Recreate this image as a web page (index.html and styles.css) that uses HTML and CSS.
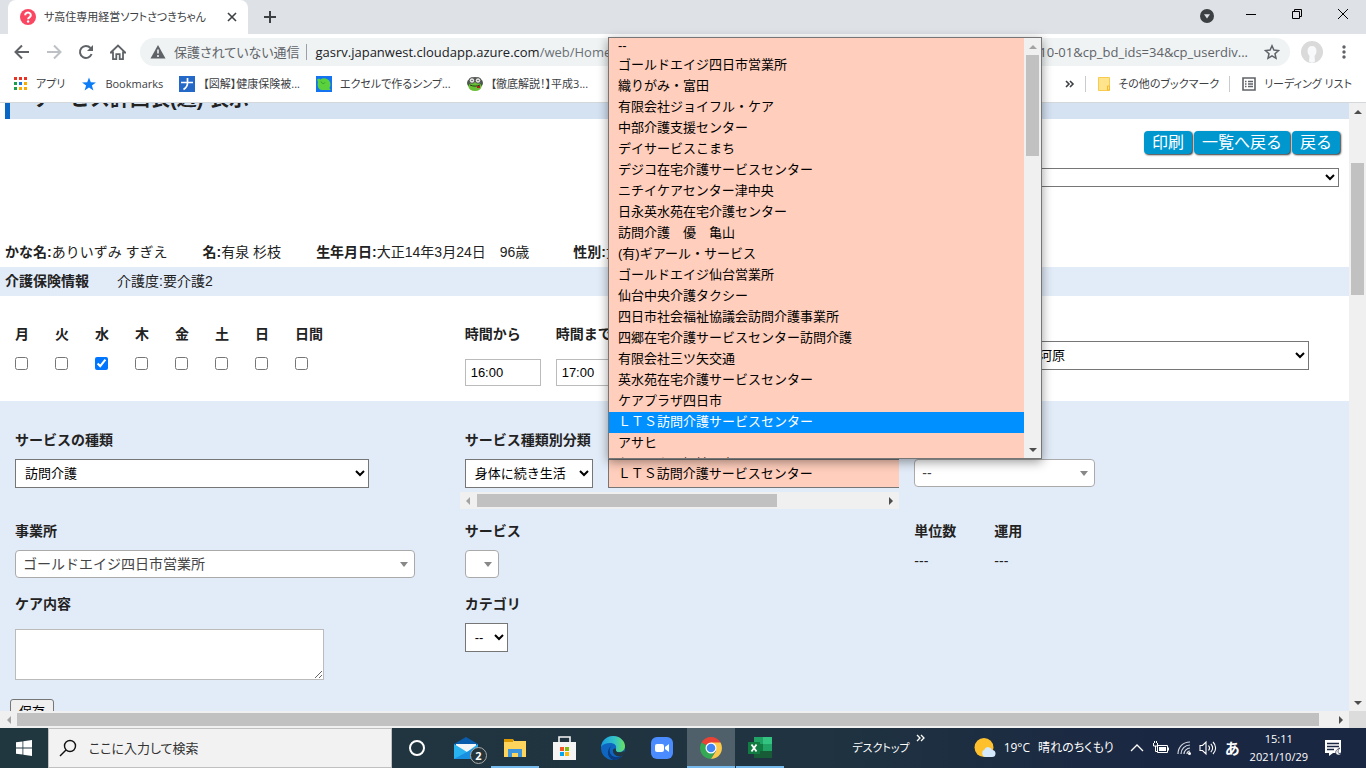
FILE: index.html
```html
<!DOCTYPE html>
<html lang="ja">
<head>
    <meta charset="UTF-8">
    <meta name="viewport" content="width=device-width, initial-scale=1.0">
    <title>サ高住専用経営ソフトさつきちゃん</title>
    <link rel="stylesheet" href="styles.css">
</head>
<body>

    <!-- browser window -->
    <header class="browser">
        <div class="tab-strip">
            <div class="tab">
                <svg class="favicon" width="16" height="16" viewBox="0 0 16 16"><circle cx="8" cy="8" r="8" fill="#fb4662"/><path d="M5.2 6.2a2.8 2.6 0 1 1 4.3 2.1c-1 .7-1.4 1-1.4 2" fill="none" stroke="#fff" stroke-width="2"/><circle cx="8.1" cy="12.5" r="1.2" fill="#fff"/></svg>
                <span class="tab-title">サ高住専用経営ソフトさつきちゃん</span>
                <button class="icon-button" aria-label="タブを閉じる"><svg width="16" height="16" viewBox="0 0 16 16"><path d="M4 4l8 8M12 4l-8 8" stroke="#3c4043" stroke-width="1.6"/></svg></button>
            </div>
            <button class="icon-button new-tab" aria-label="新しいタブ"><svg width="16" height="16" viewBox="0 0 16 16"><path d="M8 2v12M2 8h12" stroke="#3c4043" stroke-width="2"/></svg></button>
            <div class="window-controls">
                <button class="icon-button tab-search" aria-label="タブを検索"><svg width="16" height="16" viewBox="0 0 16 16"><circle cx="8" cy="8" r="7" fill="#3c4043"/><path d="M5 6.3h6L8 10.5z" fill="#dee1e6"/></svg></button>
                <button class="icon-button" aria-label="最小化"><svg width="12" height="12" viewBox="0 0 12 12"><path d="M1 6.5h10" stroke="#000"/></svg></button>
                <button class="icon-button" aria-label="元に戻す"><svg width="12" height="12" viewBox="0 0 12 12"><path d="M1.5 3.5h7v7h-7zM3.5 3V1.5h7v7H9" fill="none" stroke="#000"/></svg></button>
                <button class="icon-button" aria-label="閉じる"><svg width="12" height="12" viewBox="0 0 12 12"><path d="M1 1l10 10M11 1L1 11" stroke="#000"/></svg></button>
            </div>
        </div>

        <div class="toolbar">
            <button class="icon-button" aria-label="戻る"><svg width="16" height="16" viewBox="0 0 16 16"><path d="M15 8H2M8 1.5L1.5 8 8 14.5" fill="none" stroke="#5f6368" stroke-width="2"/></svg></button>
            <button class="icon-button" aria-label="進む"><svg width="16" height="16" viewBox="0 0 16 16"><path d="M1 8h13M8 1.5L14.5 8 8 14.5" fill="none" stroke="#bdc0c4" stroke-width="2"/></svg></button>
            <button class="icon-button" aria-label="再読み込み"><svg width="16" height="16" viewBox="0 0 16 16"><path d="M13.6 10A6 6 0 1 1 12.5 4" fill="none" stroke="#5f6368" stroke-width="2"/><path d="M15 1v6H9z" fill="#5f6368"/></svg></button>
            <button class="icon-button" aria-label="ホーム"><svg width="16" height="18" viewBox="0 0 16 18"><path d="M.8 9.500L8 2.500l7.200 7H13v6.700H9.700v-5H6.300v5H3V9.500z" fill="none" stroke="#5f6368" stroke-width="1.800"/></svg></button>
            <div class="omnibox">
                <svg width="16" height="16" viewBox="0 0 16 16"><path d="M8 1l7.5 13.5H.5z" fill="#5f6368"/><path d="M8 5.5v4M8 11v2" stroke="#eef2f4" stroke-width="1.6"/></svg>
                <span class="security">保護されていない通信</span>
                <span class="host">gasrv.japanwest.cloudapp.azure.com<span class="path">/web/Home</span></span>
                <span class="query">2021-10-01&amp;cp_bd_ids=34&amp;cp_userdiv...</span>
                <button class="icon-button" aria-label="ブックマークに追加"><svg width="16" height="16" viewBox="0 0 16 16"><path d="M8 1.8l1.9 4.3 4.6.5-3.5 3.1 1 4.6-4-2.4-4 2.4 1-4.6L1.5 6.6l4.6-.5z" fill="none" stroke="#5f6368" stroke-width="1.5"/></svg></button>
            </div>
            <button class="icon-button avatar" aria-label="プロフィール"><svg width="22" height="22" viewBox="0 0 22 22"><circle cx="11" cy="11" r="11" fill="#dadada"/><path d="M11 5c3 0 4.5 2 4.5 5 0 2-1 4-2 5l.5 5.5-3 1.500-3-1.500.5-5.500c-1-1-2-3-2-5C6.500 7 8 5 11 5z" fill="#f7f9fa"/></svg></button>
            <button class="icon-button" aria-label="メニュー"><svg width="16" height="16" viewBox="0 0 16 16"><g fill="#5f6368"><circle cx="8" cy="3" r="1.7"/><circle cx="8" cy="8" r="1.7"/><circle cx="8" cy="13" r="1.7"/></g></svg></button>
        </div>

        <nav class="bookmarks">
            <a class="bookmark" href="#"><svg width="14" height="14" viewBox="0 0 14 14"><path d="M0 0h3v3H0zM5 0h3v3H5zM10 0h3v3h-3z" fill="#ea3323"/><path d="M0 5h3v3H0z" fill="#1b9e4b"/><path d="M5 5h3v3H5z" fill="#1a73e8"/><path d="M10 5h3v3h-3zM10 10h3v3h-3zM5 10h3v3H5z" fill="#f9ab00"/><path d="M0 10h3v3H0z" fill="#1b9e4b"/></svg>アプリ</a>
            <a class="bookmark" href="#"><svg width="16" height="16" viewBox="0 0 16 16"><path d="M8 1.5l1.8 4.7 5.2.2-4.100 3.100 1.500 5L8 11.600l-4.400 2.900 1.500-5L1 6.400l5.200-.2z" fill="#0b7cf5"/></svg>Bookmarks</a>
            <a class="bookmark" href="#"><svg width="16" height="16" viewBox="0 0 16 16"><path d="M0 0h16v16H0z" fill="#2468c8"/><path d="M2 6.5h12M8.5 2v5c0 3-1.500 5-4 6.500" stroke="#fff" stroke-width="1.7" fill="none"/></svg>【図解】健康保険被...</a>
            <a class="bookmark" href="#"><svg width="16" height="16" viewBox="0 0 16 16"><path d="M0 0h16v16H0z" fill="#1473f0"/><path d="M1 3.500l2-1 1.500 1C7 1.500 12 2 14 6c1 3 .3 5-.7 6l1.500 2H6C2 14 1 9 2 6z" fill="#5bd13c"/><path d="M5 5.500C6 8 8 8 9 6.500" stroke="#2a9e35" fill="none"/></svg>エクセルで作るシンプ...</a>
            <a class="bookmark" href="#"><svg width="16" height="16" viewBox="0 0 16 16"><ellipse cx="8" cy="7" rx="8" ry="6" fill="#4a5848"/><ellipse cx="8" cy="10.5" rx="6.5" ry="4.5" fill="#68bf33"/><circle cx="5" cy="4.5" r="2.8" fill="#ddd" stroke="#555"/><circle cx="11" cy="4.5" r="2.8" fill="#ddd" stroke="#555"/><path d="M4.5 4.5h1M10.5 4.5h1" stroke="#222"/><path d="M3 9c3 1.5 7 1.5 10 0" stroke="#263c18" fill="none"/><path d="M10 10h3v2h-3z" fill="#a22"/></svg>【徹底解説！】平成3...</a>
            <div class="bookmarks-end">
                <button class="icon-button" aria-label="他のブックマーク"><svg width="10" height="10" viewBox="0 0 10 10"><path d="M1 2l3 3-3 3M5 2l3 3-3 3" fill="none" stroke="#3c4043" stroke-width="1.6"/></svg></button>
                <a class="bookmark divided" href="#"><svg width="12" height="14" viewBox="0 0 12 14"><path d="M.5.5h11v13H.5z" fill="#ffe48d" stroke="#f7cb4d"/><path d="M9.5 13v-4h2v4z" fill="#ffe48d" stroke="#f7b92a"/></svg>その他のブックマーク</a>
                <a class="bookmark divided" href="#"><svg width="14" height="14" viewBox="0 0 14 14"><path d="M1 1h12v12H1z" fill="none" stroke="#5f6368" stroke-width="1.6"/><path d="M3 4.5h1.5M3 7h1.5M3 9.5h1.5M6 4.5h5M6 7h5M6 9.5h5" stroke="#5f6368" stroke-width="1.3"/></svg>リーディング リスト</a>
            </div>
        </nav>
    </header>

    <div class="viewport">
        <main class="page">
            <div class="title-bar"><h1>サービス計画表(週) 表示</h1></div>

            <div class="actions">
                <button class="action">印刷</button>
                <button class="action">一覧へ戻る</button>
                <button class="action">戻る</button>
            </div>
            <div class="plan-row">
                <select class="plan-select" aria-label="計画表"><option></option></select>
            </div>

            <div class="person">
                <span><b>かな名:</b>ありいずみ すぎえ</span>
                <span><b>名:</b>有泉 杉枝</span>
                <span class="birth"><b>生年月日:</b>大正14年3月24日　96歳</span>
                <span><b>性別:</b>女</span>
            </div>
            <div class="insurance">
                <b>介護保険情報</b>
                <span>介護度:要介護2</span>
            </div>

            <form>
                <section class="columns schedule">
                    <div class="days">
                        <label class="day">月<input type="checkbox"></label>
                        <label class="day">火<input type="checkbox"></label>
                        <label class="day">水<input type="checkbox" checked></label>
                        <label class="day">木<input type="checkbox"></label>
                        <label class="day">金<input type="checkbox"></label>
                        <label class="day">土<input type="checkbox"></label>
                        <label class="day">日<input type="checkbox"></label>
                        <label class="day">日間<input type="checkbox"></label>
                    </div>
                    <div class="times">
                        <label class="time">時間から<input type="text" value="16:00"></label>
                        <label class="time">時間まで<input type="text" value="17:00"></label>
                    </div>
                    <div class="staff">
                        <select class="select staff-select" aria-label="担当者"><option>河原</option></select>
                    </div>
                </section>

                <section class="service">
                    <div class="columns">
                        <div class="field">
                            <label for="kind">サービスの種類</label>
                            <select class="select kind-select" id="kind"><option>訪問介護</option></select>
                        </div>
                        <div class="scroller">
                            <div class="scroller-content">
                                <div class="field">
                                    <label for="class">サービス種類別分類</label>
                                    <select class="select class-select" id="class"><option>身体に続き生活</option></select>
                                </div>
                                <div class="field unlabelled">
                                    <select class="select office-select" aria-label="サービス事業所"><option>ＬＴＳ訪問介護サービスセンター</option></select>
                                </div>
                            </div>
                            <div class="scrollbar horizontal" aria-hidden="true">
                                <span class="arrow left dim"></span>
                                <div class="track"><div class="thumb part"></div></div>
                                <span class="arrow right"></span>
                            </div>
                        </div>
                        <div class="field unlabelled">
                            <div class="combo combo-medium"><select aria-label="加算"><option>--</option></select></div>
                        </div>
                    </div>

                    <div class="columns office-row">
                        <div class="field">
                            <label for="office">事業所</label>
                            <div class="combo"><select id="office"><option>ゴールドエイジ四日市営業所</option></select></div>
                        </div>
                        <div class="field">
                            <label for="service">サービス</label>
                            <div class="combo combo-small"><select id="service"><option></option></select></div>
                        </div>
                        <dl class="units">
                            <div><dt>単位数</dt><dd>---</dd></div>
                            <div><dt>運用</dt><dd>---</dd></div>
                        </dl>
                    </div>

                    <div class="columns care-row">
                        <div class="field">
                            <label for="care">ケア内容</label>
                            <textarea id="care"></textarea>
                        </div>
                        <div class="field">
                            <label for="category">カテゴリ</label>
                            <select class="select category-select" id="category"><option>--</option></select>
                        </div>
                    </div>

                    <button class="save" type="button">保存</button>
                </section>
            </form>
        </main>
        <div class="scrollbar vertical" aria-hidden="true">
            <span class="arrow up"></span>
            <div class="track"><div class="thumb page-thumb"></div></div>
            <span class="arrow down"></span>
        </div>
    </div>
    <div class="bottom-scroll" aria-hidden="true">
        <div class="scrollbar horizontal">
            <span class="arrow left dim"></span>
            <div class="track"><div class="thumb wide"></div></div>
            <span class="arrow right"></span>
        </div>
        <span class="corner"></span>
    </div>

    <!-- open list of the office select -->
    <div class="popup">
        <ul class="options" role="listbox" aria-label="サービス事業所">
            <li class="empty" role="option">--</li>
            <li role="option">ゴールドエイジ四日市営業所</li>
            <li role="option">織りがみ・富田</li>
            <li role="option">有限会社ジョイフル・ケア</li>
            <li role="option">中部介護支援センター</li>
            <li role="option">デイサービスこまち</li>
            <li role="option">デジコ在宅介護サービスセンター</li>
            <li role="option">ニチイケアセンター津中央</li>
            <li role="option">日永英水苑在宅介護センター</li>
            <li role="option">訪問介護　優　亀山</li>
            <li role="option">(有)ギアール・サービス</li>
            <li role="option">ゴールドエイジ仙台営業所</li>
            <li role="option">仙台中央介護タクシー</li>
            <li role="option">四日市社会福祉協議会訪問介護事業所</li>
            <li role="option">四郷在宅介護サービスセンター訪問介護</li>
            <li role="option">有限会社三ツ矢交通</li>
            <li role="option">英水苑在宅介護サービスセンター</li>
            <li role="option">ケアプラザ四日市</li>
            <li class="selected" role="option" aria-selected="true">ＬＴＳ訪問介護サービスセンター</li>
            <li role="option">アサヒ</li>
            <li role="option">ケアハウス福祉の森</li>
        </ul>
        <div class="scrollbar vertical" aria-hidden="true">
            <span class="arrow up dim"></span>
            <div class="track"><div class="thumb list-thumb"></div></div>
            <span class="arrow down"></span>
        </div>
    </div>

    <footer class="taskbar">
        <button class="start" aria-label="スタート"><svg width="16" height="16" viewBox="0 0 16 16"><path d="M0 2.3L6.5 1.4v6.2H0zM7.3 1.3L16 0v7.6H7.3zM0 8.4h6.5v6.2L0 13.7zM7.3 8.4H16V16l-8.7-1.3z" fill="#fff"/></svg></button>
        <label class="search">
            <svg width="18" height="18" viewBox="0 0 18 18"><circle cx="11" cy="7" r="5.5" fill="none" stroke="#111" stroke-width="1.4"/><path d="M7 11l-6 6" stroke="#111" stroke-width="1.4"/></svg>
            <input type="text" placeholder="ここに入力して検索">
        </label>
        <div class="task-icons">
            <button class="task" aria-label="Cortana"><svg width="24" height="24" viewBox="0 0 24 24"><circle cx="12" cy="12" r="7" fill="none" stroke="#fff" stroke-width="2"/></svg></button>
            <button class="task" aria-label="メール"><svg width="24" height="24" viewBox="0 0 24 24"><path d="M0 8l12-7 12 7v2H0z" fill="#0a5cad"/><path d="M2 8h20v10H2z" fill="#f4f6f8"/><path d="M0 8l13 8 11-8v15H0z" fill="#28b2ef"/><path d="M0 23l24-13v13z" fill="#198fe0"/></svg><span class="badge">2</span></button>
            <button class="task running" aria-label="エクスプローラー"><svg width="24" height="24" viewBox="0 0 24 24"><path d="M1 3h9l1 2h12v16H1z" fill="#ffd45c"/><path d="M1 3h9v3H1z" fill="#dd9a00"/><path d="M5 13h14v8h-4v-4H9v4H5z" fill="#3d96dd"/></svg></button>
            <button class="task" aria-label="Microsoft Store"><svg width="24" height="24" viewBox="0 0 24 24"><path d="M7 7V1h11v6" fill="none" stroke="#f5f5f5" stroke-width="1.6"/><path d="M1 6h23v18H1z" fill="#f4f4f4"/><path d="M8 11h4v4H8z" fill="#f35325"/><path d="M13 11h4v4h-4z" fill="#81bc06"/><path d="M8 16h4v4H8z" fill="#05a6f0"/><path d="M13 16h4v4h-4z" fill="#ffba08"/></svg></button>
            <button class="task" aria-label="Microsoft Edge"><svg width="24" height="24" viewBox="0 0 24 24"><defs><linearGradient id="edge"><stop offset="0" stop-color="#189de2"/><stop offset=".6" stop-color="#37c6c4"/><stop offset="1" stop-color="#69e15b"/></linearGradient></defs><circle cx="12" cy="12" r="12" fill="#0f66c0"/><path d="M0 11C1 4 6 0 12 0c7 0 12 5 12 10 0 4-3 6-6 6-4 0-5-1-3-3 1-4-2-6-6-6-4 0-7 1-9 4z" fill="url(#edge)"/><path d="M11 9c-4 3-3 12 4 12 4 0 6-2 7-3-2 4-6 6-10 6-5-2-8-9-1-15z" fill="#0b3b80"/><path d="M15 13c-1 4 5 4 8 2l1 3-3 2c-5 1-9-1-9-5 0-2 1-3 3-2z" fill="#213641"/></svg></button>
            <button class="task" aria-label="Zoom"><svg width="24" height="24" viewBox="0 0 24 24"><rect x="1" y="1" width="22" height="22" rx="6" fill="#4a8cff"/><rect x="5" y="8" width="9" height="8" rx="2" fill="#fff"/><path d="M15 11l4-3v8l-4-3z" fill="#fff"/></svg></button>
            <button class="task active" aria-label="Google Chrome"><svg width="24" height="24" viewBox="0 0 24 24"><path d="M12 12L2.5 6.5a11 11 0 0 1 19 0z" fill="#ea4335"/><path d="M12 12l-9.5-5.5A11 11 0 0 0 12 23l5-9z" fill="#34a853"/><path d="M12 6.5h9.5A11 11 0 0 1 12 23l5-8z" fill="#fbc94b"/><circle cx="12" cy="12" r="5.5" fill="#fff"/><circle cx="12" cy="12" r="4.3" fill="#4285f4"/></svg></button>
            <button class="task running" aria-label="Excel"><svg width="24" height="24" viewBox="0 0 24 24"><path d="M6 1h9v7H6z" fill="#21a366"/><path d="M15 1h9v7h-9z" fill="#33c481"/><path d="M6 8h9v7H6z" fill="#107c41"/><path d="M15 8h9v7h-9z" fill="#21a366"/><path d="M6 15h18v7H6z" fill="#185c37"/><path d="M0 6h12v12H0z" fill="#107c41"/><path d="M3.5 8.5l5 7M8.5 8.5l-5 7" stroke="#fff" stroke-width="1.8"/></svg></button>
        </div>
        <div class="tray">
            <span class="desktop">デスクトップ</span>
            <svg class="overflow" width="10" height="10" viewBox="0 0 10 10"><path d="M1 2l3 3-3 3M5 2l3 3-3 3" fill="none" stroke="#fff" stroke-width="1.3"/></svg>
            <div class="weather">
                <svg width="22" height="22" viewBox="0 0 22 22"><circle cx="10" cy="10.5" r="9.5" fill="#ffc02e"/><path d="M11 20a4 4 0 0 1-.5-7.5 4 4 0 0 1 7.5.5 3.500 3.500 0 0 1 0 7z" fill="#d4e9fb"/></svg>
                <span>19°C</span>
                <span>晴れのちくもり</span>
            </div>
            <div class="status">
                <svg width="14" height="14" viewBox="0 0 14 14"><path d="M1 10l6-6 6 6" fill="none" stroke="#fff" stroke-width="1.3"/></svg>
                <svg width="17" height="16" viewBox="0 0 17 16"><path d="M5.5 5.5h10v7h-10z" fill="none" stroke="#fff"/><path d="M7 7h7v4H7zM16 7.5h1v3h-1z" fill="#fff"/><path d="M1.5 3v3h4V3M2.5 1v2M4.5 1v2M3.5 6v5.5H6" fill="none" stroke="#fff"/></svg>
                <svg width="14" height="14" viewBox="0 0 14 14"><path d="M1 13C1 6 6 1 13 1M4 13c0-5 4-9 9-9M7 13c0-3 3-6 6-6M10 13c0-2 1-3 3-3" fill="none" stroke="#d5dae0" stroke-width="1.2"/><circle cx="12.5" cy="12.5" r="1.5" fill="#fff"/></svg>
                <svg width="18" height="16" viewBox="0 0 18 16"><path d="M1 5.5h2.5L7 2v12l-3.5-3.5H1zM9.5 5.5c1.3 1.5 1.3 3.5 0 5M11.8 3.8c2.4 2.4 2.4 6 0 8.4M14 2c3.5 3.5 3.5 8.5 0 12" fill="none" stroke="#fff" stroke-width="1.1"/></svg>
                <b class="ime">あ</b>
            </div>
            <div class="clock"><span>15:11</span><span>2021/10/29</span></div>
            <svg width="18" height="18" viewBox="0 0 18 18"><path d="M1 1h16v13H9l-4 3v-3H1z" fill="#fff"/><path d="M3 4.5h12M3 7.5h12M3 10.5h7" stroke="#1a2743" stroke-width="1.3"/><path d="M16 9c-3 1-5 3-4 6 2 2 5 1 5-1-2 1-3 0-3-1 0-2 1-3 2-4z" fill="#fff" stroke="#1a2743" stroke-width=".7"/></svg>
        </div>
    </footer>

</body>
</html>
```
FILE: styles.css
```css
* {
    box-sizing: border-box;
}
body {
    margin: 0;
    height: 100vh;
    display: flex;
    flex-direction: column;
    overflow: hidden;
    font-family: "Liberation Sans", "Noto Sans CJK JP", sans-serif;
    font-size: 14px;
    line-height: 20px;
    color: #222;
    background-color: #fff;
}
svg {
    display: block;
    flex: none;
}
button, select, input, textarea {
    font-family: inherit;
    margin: 0;
}

/* browser */
.browser {
    flex: none;
    font-family: "Open Sans", "Noto Sans CJK JP", sans-serif;
    font-feature-settings: "palt";
    font-size: 12px;
    color: #3c4043;
    border-bottom: 1px solid #d5d8db;
}
.icon-button {
    flex: none;
    display: flex;
    align-items: center;
    justify-content: center;
    padding: 0;
    border: none;
    background: none;
}
.tab-strip {
    height: 34px;
    display: flex;
    align-items: center;
    padding-left: 8px;
    background-color: #dee1e6;
}
.tab {
    width: 240px;
    height: 34px;
    display: flex;
    align-items: center;
    gap: 8px;
    padding: 0 8px 0 12px;
    border-radius: 8px 8px 0 0;
    background-color: #fff;
}
.tab-title {
    flex: 1;
    font-size: 11px;
    white-space: nowrap;
    overflow: hidden;
}
.new-tab {
    margin-left: 14px;
}
.window-controls {
    margin-left: auto;
    display: flex;
    align-items: center;
    gap: 34px;
    padding: 0 17px 6px 0;
}
.tab-search {
    padding-top: 4px;
    margin-right: -4px;
}
.toolbar {
    height: 36px;
    display: flex;
    align-items: center;
    gap: 16px;
    padding: 0 14px;
}
.omnibox {
    flex: 1;
    height: 28px;
    display: flex;
    align-items: center;
    gap: 8px;
    margin-left: -2px;
    padding: 0 10px;
    border-radius: 14px;
    background-color: #eff3f4;
    font-size: 13px;
    white-space: nowrap;
}
.security {
    padding-right: 7px;
    border-right: 1px solid #9aa0a6;
    line-height: 16px;
    color: #5f6368;
}
.host {
    color: #202124;
}
.path {
    color: #6b7075;
}
.query {
    margin-left: auto;
    margin-right: 8px;
    color: #5f6368;
}
.avatar {
    margin: 0 -3px 0 -5px;
}
.bookmarks {
    height: 32px;
    display: flex;
    align-items: center;
    gap: 16px;
    padding: 0 14px 4px;
}
.bookmark {
    display: flex;
    align-items: center;
    gap: 8px;
    color: #3c4043;
    font-size: 11px;
    line-height: 16px;
    text-decoration: none;
    white-space: nowrap;
}
.bookmarks-end {
    margin-left: auto;
    display: flex;
    align-items: center;
    gap: 10px;
}
.divided {
    padding-left: 12px;
    border-left: 1px solid #c8cbcf;
}

/* scrollbars */
.scrollbar {
    flex: none;
    display: flex;
    background-color: #f0f0f0;
}
.scrollbar.vertical {
    width: 17px;
    flex-direction: column;
}
.scrollbar.horizontal {
    height: 17px;
}
.scrollbar .arrow {
    flex: none;
    width: 17px;
    height: 17px;
    display: flex;
    align-items: center;
    justify-content: center;
    color: #4d4d4d;
}
.scrollbar .arrow.dim {
    color: #a3a3a3;
}
.arrow::before {
    content: "";
    border: 4px solid transparent;
}
.arrow.up::before {
    border-top: none;
    border-bottom-color: currentColor;
}
.arrow.down::before {
    border-bottom: none;
    border-top-color: currentColor;
}
.arrow.left::before {
    border-left: none;
    border-right-color: currentColor;
}
.arrow.right::before {
    border-right: none;
    border-left-color: currentColor;
}
.track {
    flex: 1;
    min-height: 0;
    padding: 0 2px;
}
.horizontal .track {
    padding: 2px 0;
}
.thumb {
    height: 100%;
    background-color: #c1c1c1;
}
.page-thumb {
    height: 132px;
    margin-top: 43px;
}
.list-thumb {
    height: 101px;
}
.part {
    width: 74%;
}
.wide {
    width: 99%;
}

/* page */
.viewport {
    flex: 1;
    min-height: 0;
    display: flex;
}
.page {
    flex: 1;
    min-width: 0;
    overflow: hidden;
}
.title-bar {
    height: 16px;
    display: flex;
    align-items: flex-end;
    overflow: hidden;
    margin-left: 5px;
    padding-left: 20px;
    border-left: 5px solid #0a66c4;
    background-color: #d5e2f2;
}
.title-bar h1 {
    margin: 0;
    padding-bottom: 6px;
    font-size: 20px;
    line-height: 28px;
}
.actions {
    display: flex;
    justify-content: flex-end;
    gap: 2px;
    padding: 12px 9px 0 0;
}
.action {
    height: 23px;
    padding: 0 8px;
    border: none;
    border-radius: 4px;
    background-color: #0097cf;
    box-shadow: 1px 1px 2px #333;
    color: #fff;
    font-size: 16px;
    line-height: 22px;
}
.plan-row {
    display: flex;
    justify-content: flex-end;
    padding: 14px 10px 0 0;
}
.plan-select {
    width: 50%;
    height: 19px;
    border: 1px solid #767676;
    background-color: #fff;
}
.person {
    display: flex;
    gap: 35px;
    padding: 55px 5px 5px;
}
.birth {
    padding-right: 9px;
}
.insurance {
    display: flex;
    gap: 28px;
    padding: 4px 5px 5px;
    background-color: #e2ecf8;
}
.columns {
    display: grid;
    grid-template-columns: repeat(3, 1fr);
}
.columns > * {
    min-width: 0;
    padding: 0 15px;
}
.schedule {
    padding: 28px 0 15px;
}
.days {
    display: flex;
}
.day {
    width: 40px;
    display: flex;
    flex-direction: column;
    gap: 13px;
    font-weight: bold;
    white-space: nowrap;
}
.day input {
    width: 13px;
    height: 13px;
}
.times {
    display: flex;
    gap: 15px;
}
.time {
    width: 76px;
    display: flex;
    flex-direction: column;
    gap: 15px;
    font-weight: bold;
}
.time input {
    width: 100%;
    height: 27px;
    padding: 0 5px;
    border: 1px solid #bbb;
    font-size: 13px;
}
.columns > .staff {
    display: flex;
    justify-content: flex-end;
    padding: 17px 40px 0 15px;
}
.staff-select {
    width: 280px;
}
.service {
    padding: 29px 0 20px;
    background-color: #e2ecf8;
}
.field {
    display: flex;
    flex-direction: column;
    align-items: flex-start;
}
.field label {
    margin-bottom: 9px;
    font-weight: bold;
}
.unlabelled,
.columns > .unlabelled {
    padding-top: 29px;
}
.select {
    height: 29px;
    padding: 0 5px;
    border: 1px solid #767676;
    border-radius: 0;
    background-color: #fff;
    color: #000;
    font-size: 13px;
}
.kind-select {
    width: 354px;
}
.class-select {
    width: 128px;
}
.office-select {
    width: 420px;
    background-color: #ffcebc;
}
.category-select {
    width: 43px;
}
.columns > .scroller {
    margin: 0 0 0 10px;
    padding: 0;
}
.scroller-content {
    display: flex;
    gap: 15px;
    padding: 0 0 4px 5px;
    overflow: hidden;
}
.scroller-content .field {
    flex: none;
}
.combo {
    position: relative;
    width: 400px;
    max-width: 100%;
}
.combo-medium {
    width: 181px;
}
.combo-small {
    width: 34px;
}
.combo select {
    appearance: none;
    width: 100%;
    height: 28px;
    padding: 0 7px;
    border: 1px solid #aaa;
    border-radius: 4px;
    background-color: #fff;
    color: #444;
    font-size: 14px;
}
.combo::after {
    content: "";
    position: absolute;
    right: 7px;
    top: 12px;
    border: 4px solid transparent;
    border-top: 5px solid #888;
    border-bottom: none;
}
.office-row {
    padding-top: 12px;
}
.units {
    display: flex;
    gap: 38px;
    margin: 0;
}
.units dt {
    font-weight: bold;
}
.units dd {
    margin: 10px 0 0;
}
.care-row {
    padding-top: 16px;
}
.care-row textarea {
    width: 309px;
    height: 51px;
    margin-top: 6px;
    border: 1px solid #bbb;
}
.save {
    display: block;
    margin: 19px 0 0 10px;
    padding: 1px 8px;
    border: 1px solid #767676;
    border-radius: 3px;
    background-color: #efefef;
    color: #000;
    font-size: 13px;
}
.bottom-scroll {
    flex: none;
    display: flex;
}
.bottom-scroll .scrollbar {
    flex: 1;
}
.corner {
    width: 17px;
    background-color: #dcdcdc;
}

/* open list */
.popup {
    position: absolute;
    left: 608px;
    top: 37px;
    width: 434px;
    height: 422px;
    display: flex;
    border: 1px solid #767676;
    background-color: #ffcebc;
    box-shadow: 0 3px 10px rgba(0, 0, 0, 0.4);
}
.options {
    flex: 1;
    margin: 0;
    padding: 0;
    overflow: hidden;
    list-style: none;
    color: #000;
    font-size: 13px;
    line-height: 19px;
}
.options li {
    height: 21px;
    padding-left: 9px;
}
.options .empty {
    height: 17px;
    line-height: 15px;
}
.options .selected {
    background-color: #0090ff;
    color: #fff;
}

/* taskbar */
.taskbar {
    flex: none;
    height: 40px;
    display: flex;
    background: linear-gradient(90deg, #213740, #1f3340 60%, #1a2743 85%);
    color: #fff;
    font-family: "Open Sans", "Noto Sans CJK JP", sans-serif;
    font-feature-settings: "palt";
    font-size: 12px;
}
.start, .task {
    width: 48px;
    display: flex;
    align-items: center;
    justify-content: center;
    padding: 0;
    border: none;
    background: none;
}
.search {
    width: 344px;
    display: flex;
    align-items: center;
    gap: 12px;
    padding: 0 10px;
    border: 1px solid #c0c0c0;
    background-color: #f2f2f2;
}
.search input {
    flex: 1;
    padding: 0;
    border: none;
    background: none;
    font-size: 13px;
    font-feature-settings: inherit;
}
.search input::placeholder {
    color: #333;
}
.task-icons {
    display: flex;
    gap: 1px;
    margin-left: 1px;
}
.task {
    position: relative;
}
.running {
    box-shadow: inset 0 -2px #76b9ed;
}
.active {
    background-color: #4f606b;
    box-shadow: inset 0 -2px #76b9ed;
}
.badge {
    position: absolute;
    right: 3px;
    bottom: 4px;
    width: 17px;
    height: 17px;
    border: 1px solid #aaa;
    border-radius: 50%;
    background-color: #26343b;
    color: #fff;
    font-size: 11px;
    font-weight: bold;
    line-height: 15px;
}
.tray {
    margin-left: auto;
    display: flex;
    align-items: center;
    padding-right: 24px;
    white-space: nowrap;
}
.desktop {
    font-size: 11px;
}
.overflow {
    margin: 0 48px 20px 6px;
}
.weather {
    display: flex;
    align-items: center;
    gap: 8px;
    margin-right: 16px;
}
.status {
    display: flex;
    align-items: center;
    gap: 8px;
}
.ime {
    font-size: 15px;
}
.clock {
    display: flex;
    flex-direction: column;
    align-items: center;
    margin: 0 16px 0 10px;
    font-size: 11px;
    line-height: 18px;
}
```
